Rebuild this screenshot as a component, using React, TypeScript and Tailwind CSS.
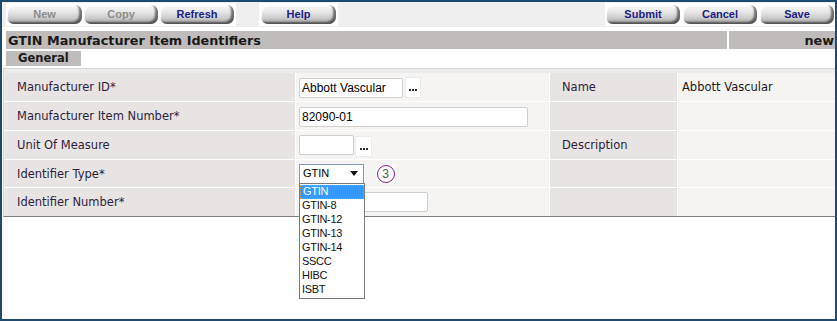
import React from 'react'

const verdana = "font-['DejaVu_Sans',Verdana,sans-serif]"
const arial = "font-['Liberation_Sans',Arial,sans-serif]"

function ToolButton({ label, disabled = false, w = 'w-[74px]' }: { label: string; disabled?: boolean; w?: string }) {
  return (
    <div
      className={`${w} h-[19px] rounded-[7px] flex items-center justify-center text-[11px] font-bold ${arial} bg-[linear-gradient(to_bottom,#fbfbfb_0%,#e4e4e4_40%,#cacaca_70%,#9c9c9c_100%)] shadow-[inset_-3px_-2px_2px_rgba(0,0,0,0.5),inset_1px_1px_0_rgba(255,255,255,0.9)] ${
        disabled ? 'text-[#8c8c8c]' : 'text-[#1c1c86]'
      }`}
    >
      {label}
    </div>
  )
}

function Ellipsis({ w = 'w-[16px]' }: { w?: string }) {
  return (
    <div className={`${w} h-[21px] bg-white border border-[#ececec] flex items-end justify-center pb-[6px] gap-[1px]`}>
      <span className="w-[2px] h-[2px] bg-[#333]" />
      <span className="w-[2px] h-[2px] bg-[#333]" />
      <span className="w-[2px] h-[2px] bg-[#333]" />
    </div>
  )
}

function TextInput({ value = '', w }: { value?: string; w: string }) {
  return (
    <div className={`${w} h-[20px] bg-white border border-[#cfcfcf] rounded-[2px] flex items-center px-[2px] text-[12px] text-black ${arial}`}>
      {value}
    </div>
  )
}

const OPTIONS = ['GTIN', 'GTIN-8', 'GTIN-12', 'GTIN-13', 'GTIN-14', 'SSCC', 'HIBC', 'ISBT']

function Label({ children }: { children?: React.ReactNode }) {
  return (
    <div className={`bg-[#e7e4e3] flex items-center pl-[12px] pt-[2px] text-[11.5px] text-[#2e1f3d] ${verdana}`}>{children}</div>
  )
}

function Value({ children, className = '' }: { children?: React.ReactNode; className?: string }) {
  return <div className={`bg-[#f6f4f3] flex items-center ${className}`}>{children}</div>
}

export default function App() {
  return (
    <div className="w-[837px] h-[321px] border-2 border-[#1f4a6e] bg-white flex flex-col overflow-hidden">
      {/* toolbar */}
      <div className="h-[25px] bg-[#efefef] flex items-start">
        <div className="ml-[4px] mt-[1px] h-[23px] bg-white flex items-center gap-[2px] pl-[1px] pr-[2px]">
          <ToolButton label="New" disabled w="w-[75px]" />
          <ToolButton label="Copy" disabled />
          <ToolButton label="Refresh" />
        </div>
        <div className="ml-[23px] mt-[1px] h-[23px] bg-white flex items-center px-[2px]">
          <ToolButton label="Help" w="w-[75px]" />
        </div>
        <div className="ml-auto mt-[1px] h-[23px] bg-white flex items-center gap-[3px] pl-[1px] pr-[1px]">
          <ToolButton label="Submit" />
          <ToolButton label="Cancel" />
          <ToolButton label="Save" />
        </div>
      </div>

      {/* title */}
      <div className="mt-[4px] ml-[4px] flex gap-[2px] h-[18px]">
        <div className={`flex-1 bg-[#c0bcbb] flex items-center pl-[2px] pt-px text-[12.8px] font-bold text-[#1a1a1a] ${verdana}`}>
          GTIN Manufacturer Item Identifiers
        </div>
        <div className={`w-[106px] bg-[#c0bcbb] flex items-center justify-end pr-[1px] pt-px text-[12.8px] font-bold text-[#1a1a1a] ${verdana}`}>
          new
        </div>
      </div>

      {/* tab */}
      <div className="mt-[2px] ml-[4px] flex">
        <div className={`w-[75px] h-[15px] bg-[#c0bcbb] flex items-center pl-[12px] pt-px text-[11.5px] font-bold text-[#1a1a1a] ${verdana}`}>
          General
        </div>
      </div>

      {/* form */}
      <div className="mt-[2px] ml-[1px] border-t border-l border-[#d6d6d6] border-b border-b-[#7d7d7d] bg-[#ececec] pt-[4px] pl-[1px]">
        <div className="grid grid-cols-[290px_253px_127px_1fr] grid-rows-[28px_28px_28px_27px_28px] gap-px bg-white">
          <Label>Manufacturer ID*</Label>
          <Value className="pl-[3px] pt-px gap-[2px]">
            <TextInput value="Abbott Vascular" w="w-[104px]" />
            <Ellipsis />
          </Value>
          <Label>Name</Label>
          <Value className={`pl-[4px] pt-[2px] text-[11.5px] text-[#1a1a1a] ${verdana}`}>Abbott Vascular</Value>

          <Label>Manufacturer Item Number*</Label>
          <Value className="pl-[3px] pt-px">
            <TextInput value="82090-01" w="w-[229px]" />
          </Value>
          <Label />
          <Value />

          <Label>Unit Of Measure</Label>
          <Value className="pl-[3px] gap-[1px]">
            <TextInput w="w-[55px]" />
            <div className="mt-[3px]">
              <Ellipsis w="w-[17px]" />
            </div>
          </Value>
          <Label>Description</Label>
          <Value />

          <Label>Identifier Type*</Label>
          <Value className="pl-[3px] gap-[12px] relative z-10">
            <div className="relative">
              <div className={`w-[65px] h-[20px] bg-white border border-[#7f9db9] flex items-center justify-between pl-[3px] pr-[5px] text-[11px] text-black ${arial}`}>
                <span>GTIN</span>
                <svg width="8" height="5" viewBox="0 0 8 5">
                  <path d="M0 0 L8 0 L4 5 Z" fill="#111" />
                </svg>
              </div>
              <div className={`absolute left-0 top-[19px] w-[66px] bg-white border border-[#7a7a7a] py-px text-[11px] tracking-[-0.3px] ${arial}`}>
                {OPTIONS.map((o, i) => (
                  <div
                    key={o}
                    className={`h-[14px] flex items-center pl-[2px] leading-none ${
                      i === 0 ? 'bg-[#3399ff] text-white border border-dotted border-[#e59a3a]' : 'text-[#111]'
                    }`}
                  >
                    {o}
                  </div>
                ))}
              </div>
            </div>
            <div className="w-[19px] h-[19px] bg-white flex items-center justify-center">
              <div className={`w-[18px] h-[18px] rounded-full border-[1.5px] border-[#8a1a8a] flex items-center justify-center text-[12px] text-[#555] ${arial}`}>
                3
              </div>
            </div>
          </Value>
          <Label />
          <Value />

          <Label>Identifier Number*</Label>
          <Value className="pl-[3px]">
            <TextInput w="w-[129px]" />
          </Value>
          <Label />
          <Value />
        </div>
      </div>
    </div>
  )
}
